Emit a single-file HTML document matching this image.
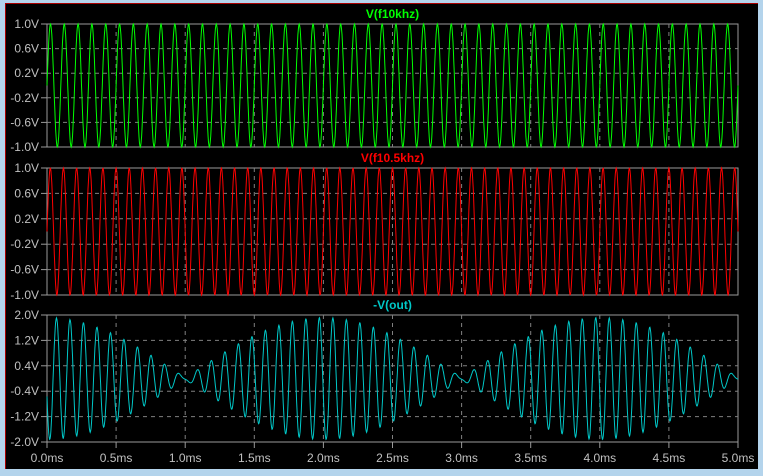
<!DOCTYPE html>
<html><head><style>
html,body{margin:0;padding:0;width:763px;height:476px;overflow:hidden;background:#b4d4ec;}
#f{position:absolute;left:5px;top:3px;width:752px;height:465px;background:#000;border-left:1px solid #a00;border-top:1px solid #a00;}
svg{position:absolute;left:0;top:0;}
text{font-family:"Liberation Sans",sans-serif;font-size:12px;}
</style></head><body>
<div id="f"></div>
<svg id="s" width="763" height="476" xmlns="http://www.w3.org/2000/svg"></svg>
<script>
const s=document.getElementById('s');
const X0=47,X1=738;
const panels=[
 {t:24,b:147,title:'V(f10khz)',c:'#00ff00',labels:['1.0V','0.6V','0.2V','-0.2V','-0.6V','-1.0V'],A:1,f:t=>Math.sin(2*Math.PI*10*t)},
 {t:168,b:295,title:'V(f10.5khz)',c:'#ff0000',labels:['1.0V','0.6V','0.2V','-0.2V','-0.6V','-1.0V'],A:1,f:t=>Math.sin(2*Math.PI*10.5*t)},
 {t:315,b:442,title:'-V(out)',c:'#00c8c8',labels:['2.0V','1.2V','0.4V','-0.4V','-1.2V','-2.0V'],A:2,f:t=>-(Math.sin(2*Math.PI*10*t+0.3)+0.92*Math.sin(2*Math.PI*10.5*t+0.3))}
];
let h='';
for(const p of panels){
 h+=`<rect x="${X0}" y="${p.t}" width="${X1-X0}" height="${p.b-p.t}" fill="none" stroke="#9a9a9a" stroke-width="1"/>`;
 for(let i=1;i<10;i++){const x=X0+(X1-X0)*i/10;h+=`<line x1="${x}" y1="${p.t}" x2="${x}" y2="${p.b}" stroke="#808080" stroke-dasharray="4,4"/>`;}
 for(let i=0;i<6;i++){const y=p.t+(p.b-p.t)*i/5;
  if(i>0&&i<5)h+=`<line x1="${X0}" y1="${y}" x2="${X1}" y2="${y}" stroke="#808080" stroke-dasharray="4,4"/>`;
  h+=`<line x1="${X0-6}" y1="${y}" x2="${X0}" y2="${y}" stroke="#9a9a9a"/>`;
  h+=`<text x="${X0-8}" y="${y+4}" text-anchor="end" fill="#c0c0c0">${p.labels[i]}</text>`;}
 h+=`<text x="${(X0+X1)/2}" y="${p.t-6}" text-anchor="middle" fill="${p.c}" font-weight="bold">${p.title}</text>`;
 let pts=[];const N=1600;
 for(let k=0;k<=N;k++){const t=5*k/N;let v=p.f(t)/p.A;v=Math.max(-1,Math.min(1,v));
  const x=X0+(X1-X0)*k/N;const y=(p.t+p.b)/2-v*(p.b-p.t)/2;pts.push(x.toFixed(1)+','+y.toFixed(1));}
 h+=`<polyline points="${pts.join(' ')}" fill="none" stroke="${p.c}" stroke-width="1"/>`;
}
for(let i=0;i<=10;i++){const x=X0+(X1-X0)*i/10;
 h+=`<line x1="${x}" y1="442" x2="${x}" y2="448" stroke="#9a9a9a"/>`;
 h+=`<text x="${x}" y="462" text-anchor="middle" fill="#c0c0c0">${(i*0.5).toFixed(1)}ms</text>`;}
s.innerHTML=h;
</script>
</body></html>
